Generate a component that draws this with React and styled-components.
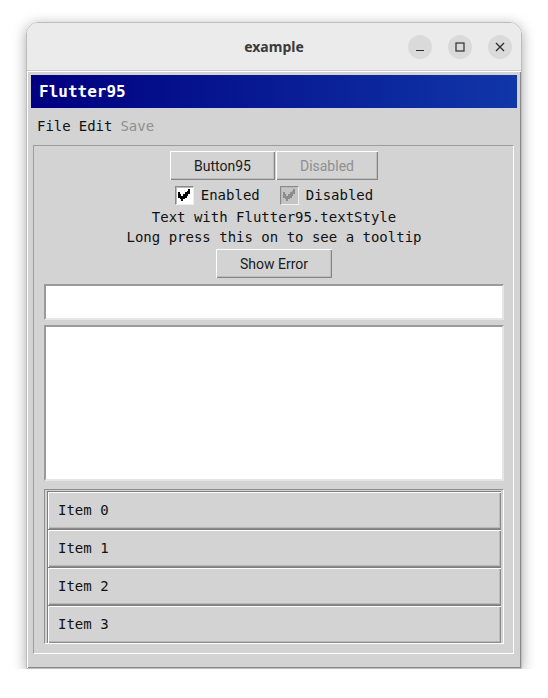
import React from "react";
import styled, { createGlobalStyle } from "styled-components";

const mono = `"DejaVu Sans Mono", "Liberation Mono", monospace`;
const grey = "#d3d3d3";

const GlobalStyle = createGlobalStyle`
    html, body {
        margin: 0;
        background: #ffffff;
    }
    * {
        box-sizing: border-box;
    }
`;

const App = () => {
    return (
        <Page>
            <GlobalStyle />
            <Window>
                <TitleBar>
                    <span />
                    <Title>example</Title>
                    <Controls>
                        <CtrlBtn aria-label="minimize">
                            <svg width="10" height="10" viewBox="0 0 10 10">
                                <path d="M1 8.5h8" stroke="#2e2e2e" strokeWidth="1.2" />
                            </svg>
                        </CtrlBtn>
                        <CtrlBtn aria-label="maximize">
                            <svg width="10" height="10" viewBox="0 0 10 10">
                                <rect x="1" y="1" width="8" height="8" fill="none" stroke="#2e2e2e" strokeWidth="1.2" />
                            </svg>
                        </CtrlBtn>
                        <CtrlBtn aria-label="close">
                            <svg width="10" height="10" viewBox="0 0 10 10">
                                <path d="M1 1l8 8M9 1l-8 8" stroke="#2e2e2e" strokeWidth="1.3" />
                            </svg>
                        </CtrlBtn>
                    </Controls>
                </TitleBar>

                <Scaffold>
                    <AppBar>Flutter95</AppBar>
                    <MenuBar>
                        <MenuItem>File</MenuItem>
                        <MenuItem>Edit</MenuItem>
                        <MenuItem $disabled>Save</MenuItem>
                    </MenuBar>

                    <Panel>
                        <ButtonRow>
                            <Button95>Button95</Button95>
                            <Button95 $disabled>Disabled</Button95>
                        </ButtonRow>

                        <CheckRow>
                            <CheckLabel>
                                <CheckBox>
                                    <Check color="#000" />
                                </CheckBox>
                                Enabled
                            </CheckLabel>
                            <CheckLabel>
                                <CheckBox $disabled>
                                    <Check color="#8c8c8c" />
                                </CheckBox>
                                Disabled
                            </CheckLabel>
                        </CheckRow>

                        <Line>Text with Flutter95.textStyle</Line>
                        <Line>Long press this on to see a tooltip</Line>

                        <Button95 $top={2}>Show Error</Button95>

                        <Field $h={36} $top={6} />
                        <Field $h={156} $top={5} />

                        <List>
                            {[0, 1, 2, 3].map((i) => (
                                <ListItem key={i}>Item {i}</ListItem>
                            ))}
                        </List>
                    </Panel>
                </Scaffold>
            </Window>
        </Page>
    );
};

// pixel check mark, 7x7 grid like the classic one
const Check = ({ color }) => (
    <svg width="12" height="12" viewBox="0 0 7 7" shapeRendering="crispEdges">
        <path
            d="M6 0h1v3h-1v1h-1v1h-1v1h-1v1h-1v-1h-1v-1h-1v-3h1v1h1v1h1v-1h1v-1h1z"
            fill={color}
        />
    </svg>
);

export default App;

const Page = styled.div`
    padding: 22px 0 0 26px;
`;

const Window = styled.div`
    width: 496px;
    height: 647px;
    display: flex;
    flex-direction: column;
    border: 1px solid #bdbdbd;
    border-radius: 12px 12px 0 0;
    box-shadow: 0 3px 14px rgba(0, 0, 0, 0.35);
    overflow: hidden;
`;

const TitleBar = styled.div`
    height: 48px;
    flex: none;
    display: grid;
    grid-template-columns: 1fr auto 1fr;
    align-items: center;
    background: #ebebeb;
    border-bottom: 1px solid #cbcbcb;
    padding: 0 9px 0 9px;
`;

const Title = styled.div`
    font-family: "Noto Sans", "DejaVu Sans", sans-serif;
    font-weight: 700;
    font-size: 14px;
    color: #3a3a3a;
`;

const Controls = styled.div`
    justify-self: end;
    display: flex;
    gap: 16px;
`;

const CtrlBtn = styled.div`
    width: 24px;
    height: 24px;
    border-radius: 50%;
    background: #dadada;
    display: flex;
    align-items: center;
    justify-content: center;
`;

const Scaffold = styled.div`
    flex: 1;
    display: flex;
    flex-direction: column;
    background: ${grey};
    padding: 4px 4px 0 4px;
    box-shadow: inset 1px 1px #ffffff, inset -1px -1px #8a8a8a;
`;

const AppBar = styled.div`
    height: 33px;
    flex: none;
    display: flex;
    align-items: center;
    padding-left: 8px;
    background: linear-gradient(90deg, #000080, #1036a8);
    color: #ffffff;
    font-family: ${mono};
    font-weight: 700;
    font-size: 16px;
`;

const MenuBar = styled.div`
    height: 36px;
    flex: none;
    display: flex;
    align-items: center;
    gap: 8px;
    padding-left: 6px;
    font-family: ${mono};
    font-size: 14px;
`;

const MenuItem = styled.span`
    color: ${(p) => (p.$disabled ? "#8f8f8f" : "#111111")};
`;

const Panel = styled.div`
    margin: 1px 3px 0 2px;
    height: 509px;
    flex: none;
    display: flex;
    flex-direction: column;
    align-items: center;
    padding: 5px 9px 9px 10px;
    border: 1px solid;
    border-color: #9c9c9c #ffffff #ffffff #9c9c9c;
`;

const ButtonRow = styled.div`
    display: flex;
    gap: 1px;
`;

const Button95 = styled.div`
    height: 29px;
    margin-top: ${(p) => p.$top || 0}px;
    padding: 0 24px;
    display: flex;
    align-items: center;
    background: ${grey};
    font-family: Roboto, "Liberation Sans", sans-serif;
    font-size: 14px;
    color: ${(p) => (p.$disabled ? "#8f8f8f" : "#1a1a1a")};
    box-shadow: inset 1px 1px #ffffff, inset -1px -1px #858585,
        inset -2px -2px #bdbdbd;
`;

const CheckRow = styled.div`
    height: 24px;
    margin-top: 3px;
    display: flex;
    align-items: center;
    gap: 20px;
`;

const CheckLabel = styled.div`
    display: flex;
    align-items: center;
    gap: 7px;
    font-family: ${mono};
    font-size: 14px;
    color: #111111;
`;

const CheckBox = styled.div`
    width: 19px;
    height: 19px;
    display: flex;
    align-items: center;
    justify-content: center;
    background: ${(p) => (p.$disabled ? "#c4c4c4" : "#ffffff")};
    border: 1px solid;
    border-color: #8a8a8a #eeeeee #eeeeee #8a8a8a;
    box-shadow: inset 1px 1px #b8b8b8;
`;

const Line = styled.div`
    height: 20px;
    line-height: 20px;
    font-family: ${mono};
    font-size: 14px;
    color: #111111;
    white-space: pre;
`;

const Field = styled.div`
    align-self: stretch;
    height: ${(p) => p.$h}px;
    margin-top: ${(p) => p.$top}px;
    background: #ffffff;
    border: 2px solid;
    border-color: #9a9a9a #e6e6e6 #e6e6e6 #9a9a9a;
`;

const List = styled.div`
    align-self: stretch;
    height: 155px;
    margin-top: 8px;
    padding: 1px 2px 0 2px;
    border: 1px solid;
    border-color: #8e8e8e #ffffff #ffffff #8e8e8e;
`;

const ListItem = styled.div`
    height: 38px;
    display: flex;
    align-items: center;
    padding-left: 11px;
    background: ${grey};
    font-family: ${mono};
    font-size: 14px;
    color: #111111;
    box-shadow: inset 1px 1px #7e7e7e, inset 2px 2px #ffffff,
        inset -1px -1px #8a8a8a, inset -2px -2px #b9b9b9;
`;
